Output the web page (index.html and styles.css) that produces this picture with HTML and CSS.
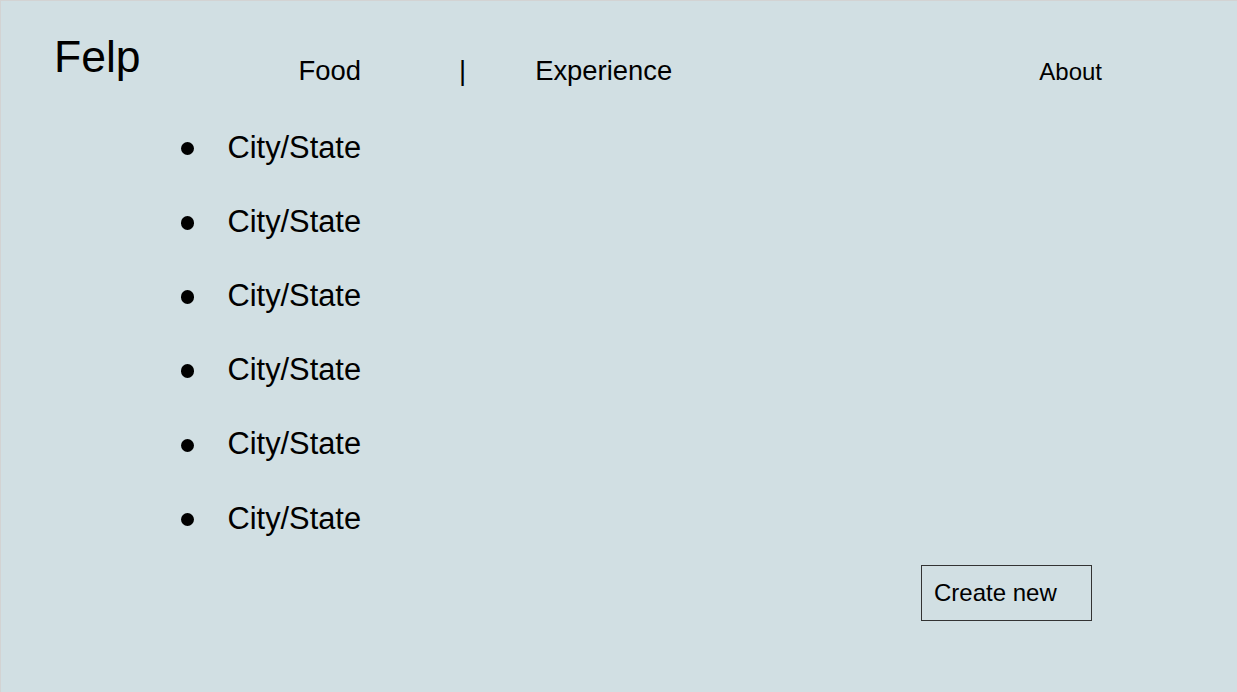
FILE: index.html
```html
<!DOCTYPE html>
<html lang="en">
<head>
<meta charset="utf-8">
<title>Felp</title>
<link rel="stylesheet" href="styles.css">
</head>
<body>
<div class="page">
  <header class="header">
    <div class="logo">Felp</div>
    <nav class="nav">
      <a class="nav-link food">Food</a>
      <span class="sep">|</span>
      <a class="nav-link exp">Experience</a>
    </nav>
    <a class="about">About</a>
  </header>
  <ul class="cities">
    <li class="city"><span class="dot"></span><span>City/State</span></li>
    <li class="city"><span class="dot"></span><span>City/State</span></li>
    <li class="city"><span class="dot"></span><span>City/State</span></li>
    <li class="city"><span class="dot"></span><span>City/State</span></li>
    <li class="city"><span class="dot"></span><span>City/State</span></li>
    <li class="city"><span class="dot"></span><span>City/State</span></li>
  </ul>
  <div class="actions">
    <button class="create">Create new</button>
  </div>
</div>
</body>
</html>
```
FILE: styles.css
```css
html, body {
  margin: 0;
  padding: 0;
}
body {
  font-family: "Liberation Sans", Arial, sans-serif;
  color: #000;
  background: #d1dfe3;
}
.page {
  box-sizing: border-box;
  min-height: 100vh;
  background: #d1dfe3;
  border-top: 1px solid #d3d3d3;
  border-left: 1px solid #d3d3d3;
}
.header {
  box-sizing: border-box;
  height: 110px;
  display: flex;
  align-items: flex-start;
  padding: 34px 135px 0 53px;
}
.logo {
  font-size: 44.5px;
  line-height: 1;
}
.nav {
  display: flex;
  align-items: flex-start;
  margin-top: 22px;
  margin-left: 158px;
  font-size: 27.4px;
  line-height: 1;
}
.sep {
  margin-left: 98px;
}
.exp {
  margin-left: 69px;
}
.about {
  margin-left: auto;
  margin-top: 25px;
  font-size: 24px;
  line-height: 1;
}
.cities {
  list-style: none;
  margin: 0;
  padding: 0 0 0 179.5px;
}
.city {
  display: flex;
  align-items: center;
  height: 74.2px;
  font-size: 30.8px;
  line-height: 1;
}
.dot {
  width: 13.5px;
  height: 13.5px;
  border-radius: 50%;
  background: #000;
  margin-right: 33.5px;
  margin-top: 1px;
  flex: none;
}
.actions {
  display: flex;
  justify-content: flex-end;
  padding-right: 145px;
  margin-top: 9px;
}
.create {
  box-sizing: border-box;
  width: 171px;
  height: 56px;
  display: flex;
  align-items: center;
  padding: 0 0 0 12px;
  background: transparent;
  border: 1px solid #333;
  border-radius: 0;
  font-family: "Liberation Sans", Arial, sans-serif;
  font-size: 24px;
  line-height: 1;
  color: #000;
}
```
